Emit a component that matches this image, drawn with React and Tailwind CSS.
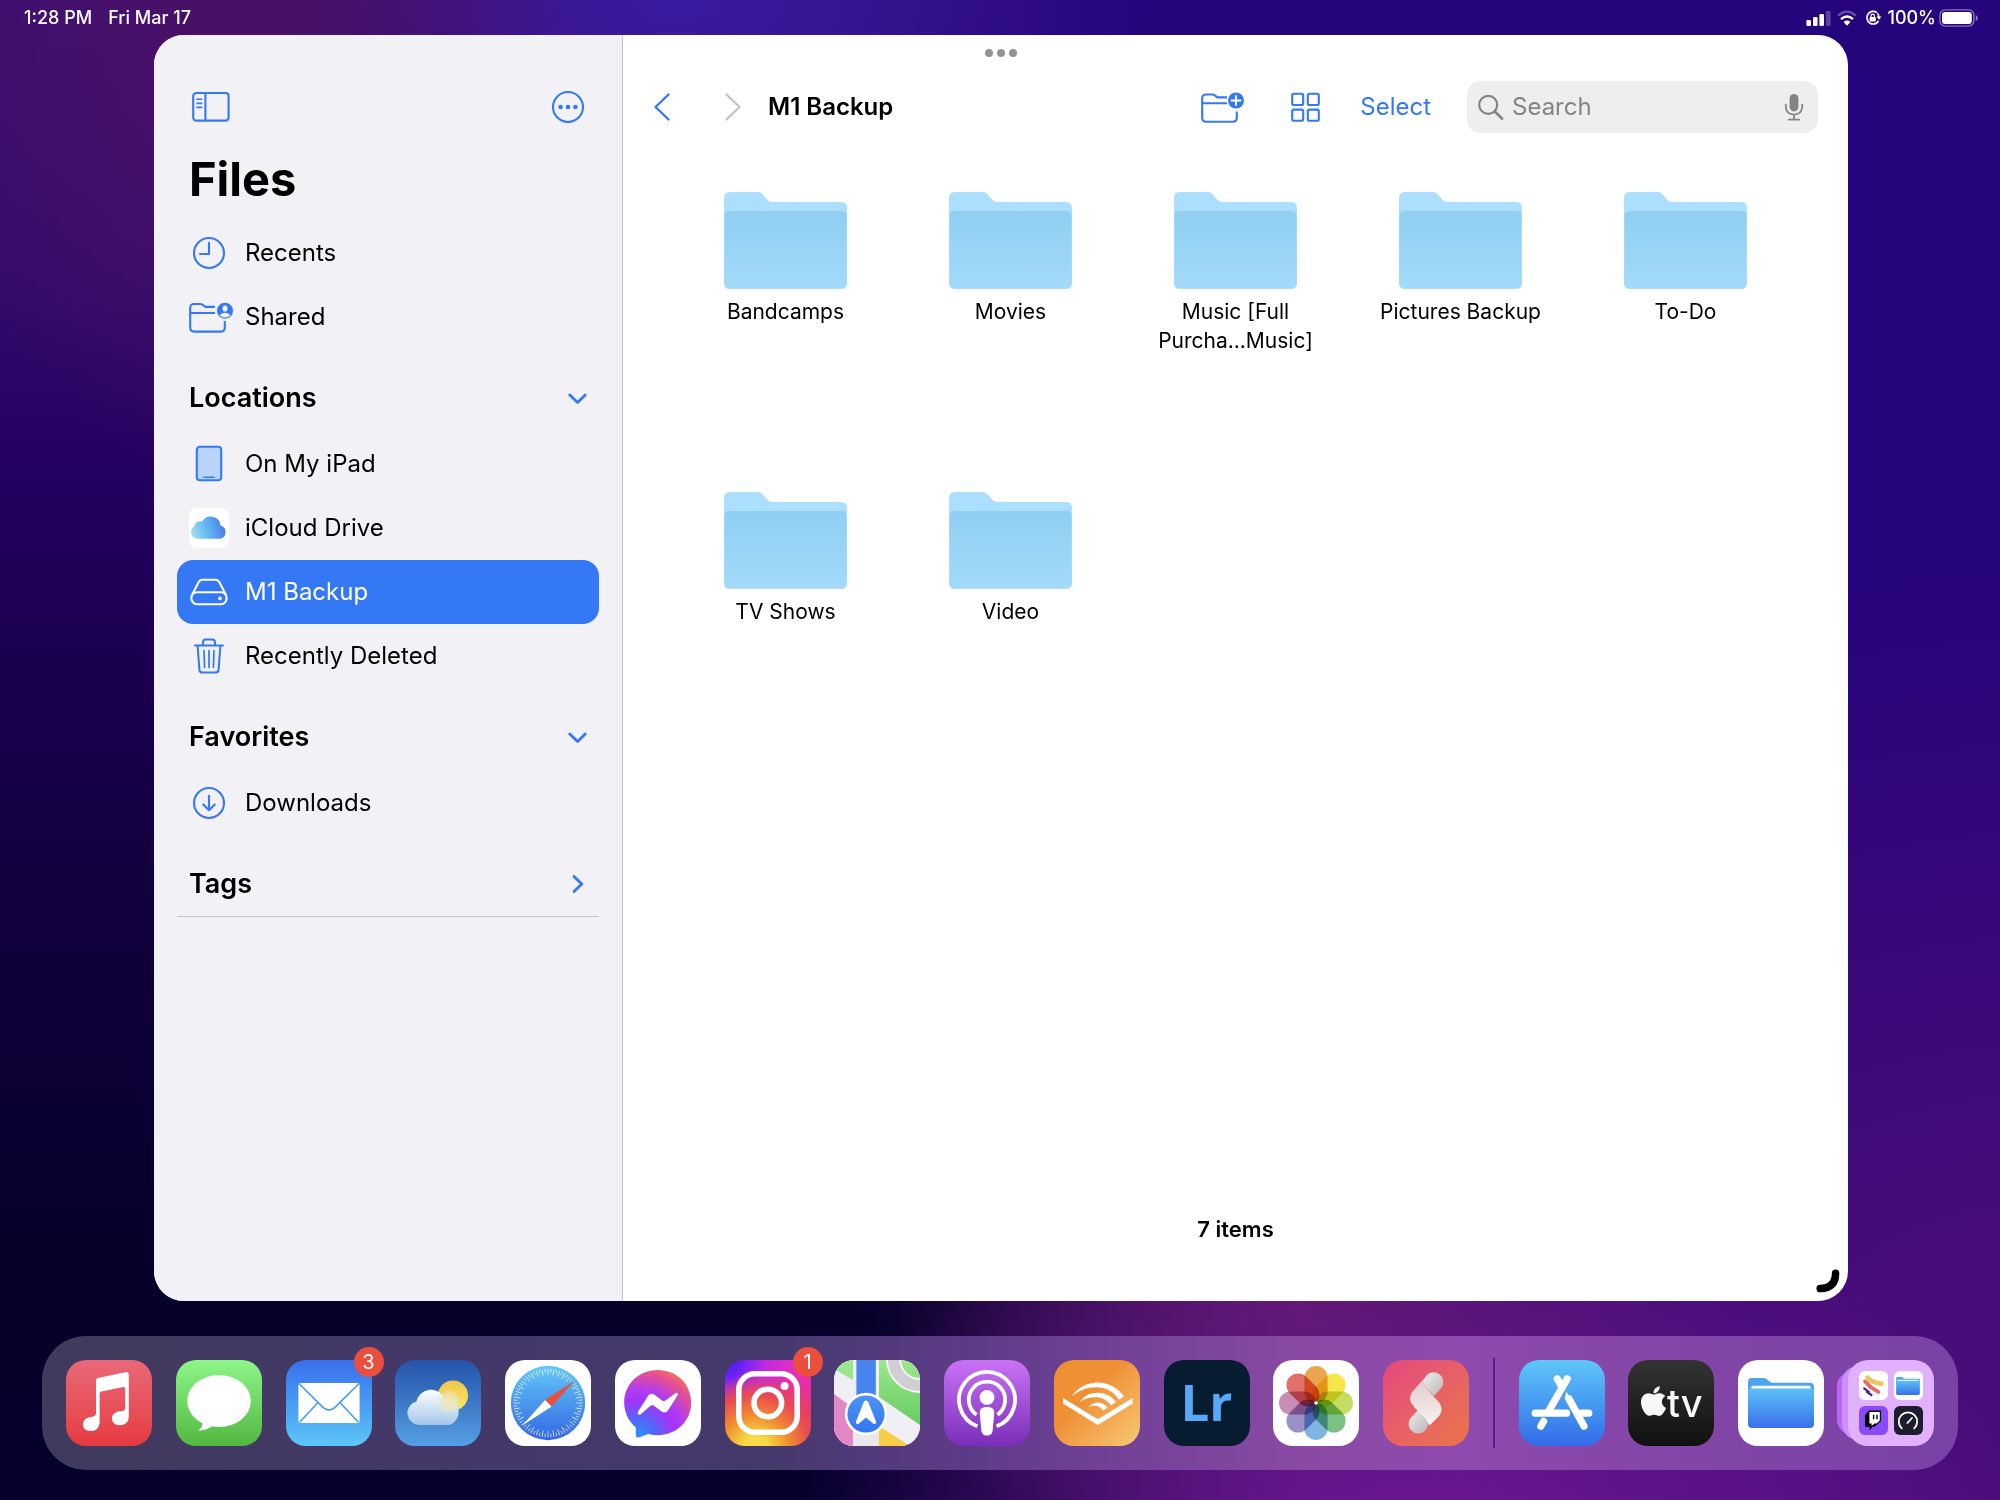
import React from "react";
import { FaApple } from "react-icons/fa";

const ClockIcon = () => (
  <svg width="40" height="40" viewBox="0 0 40 40" fill="none" stroke="currentColor" strokeWidth="2.1">
    <circle cx="20" cy="20" r="15" />
    <path d="M20 9.7V21H11" strokeLinecap="round" strokeLinejoin="round" />
  </svg>
);

const SharedIcon = () => (
  <svg width="40" height="40" viewBox="0 0 40 40" className="overflow-visible" fill="none" stroke="currentColor" strokeWidth="2.1">
    <path d="M26 9.9H16.5L13.4 7.7Q12.4 7 11.2 7H5Q1.2 7 1.2 10.8V30.5Q1.2 34.6 5.2 34.6H31.8Q35.8 34.6 35.8 30.5V24M1.2 16H26" />
    <circle cx="36" cy="13.7" r="8" fill="currentColor" stroke="none" />
    <ellipse cx="36" cy="11.5" rx="2.5" ry="3.1" fill="#f2f1f6" stroke="none" />
    <path d="M30.8 18.4Q32.2 15.8 36 15.8T41.2 18.4Q39 20.4 36 20.4T30.8 18.4Z" fill="#f2f1f6" stroke="none" />
  </svg>
);

const IPadIcon = () => (
  <svg width="40" height="40" viewBox="0 0 40 40" stroke="currentColor" strokeWidth="2.1">
    <rect x="7.8" y="2.8" width="24.4" height="33.4" rx="3" fill="#bad3f8" />
    <path d="M15 33.2H25" strokeWidth="1.5" strokeLinecap="round" />
  </svg>
);

const ICloudIcon = () => (
  <svg width="40" height="40" viewBox="0 0 40 40">
    <defs>
      <linearGradient id="icloud" x1="0" y1="0.6" x2="1" y2="0.4">
        <stop offset="0" stopColor="#a0dcf0" />
        <stop offset="0.45" stopColor="#62b8f2" />
        <stop offset="1" stopColor="#4777e4" />
      </linearGradient>
    </defs>
    <rect width="40" height="40" rx="8" fill="#fff" />
    <path d="M9.3 30.8A6.7 6.7 0 0 1 5 18.6A6 6 0 0 1 13.2 13.6A9.8 9.8 0 0 1 31.5 17.6A6.8 6.8 0 0 1 31.3 30.8Z" fill="url(#icloud)" />
  </svg>
);

const DriveIcon = () => (
  <svg width="40" height="40" viewBox="0 0 40 40" fill="none" stroke="currentColor" strokeWidth="2.1">
    <path d="M3 23L9.6 10.2Q11 7.7 13.6 7.7H26.4Q29 7.7 30.4 10.2L37 23" />
    <rect x="2.4" y="20.2" width="35.2" height="12" rx="5.6" />
    <circle cx="31" cy="26.4" r="1.8" fill="currentColor" stroke="none" />
  </svg>
);

const TrashIcon = () => (
  <svg width="40" height="40" viewBox="0 0 40 40" fill="none" stroke="currentColor" strokeWidth="2" strokeLinecap="round">
    <path d="M6 9.4H34M8.6 9.6L10.4 33.6Q10.6 36.6 13.6 36.6H26.4Q29.4 36.6 29.6 33.6L31.4 9.6" />
    <path d="M14 9V6.4Q14 3.6 16.8 3.6H23.2Q26 3.6 26 6.4V9" />
    <path d="M15 14.5L15.6 31.5M20 14.5V31.5M25 14.5L24.4 31.5" strokeWidth="1.7" />
  </svg>
);

const DownloadIcon = () => (
  <svg width="40" height="40" viewBox="0 0 40 40" fill="none" stroke="currentColor" strokeWidth="2.1" strokeLinecap="round" strokeLinejoin="round">
    <circle cx="20" cy="20" r="15" />
    <path d="M20 12.7V27M14.2 21.4L20 27.2L25.8 21.4" />
  </svg>
);

const Chevron = ({ open }) => (
  <svg width="20" height="20" viewBox="0 0 20 20" fill="none" stroke="currentColor" strokeWidth="2.8" strokeLinecap="round" strokeLinejoin="round">
    <path d={open ? "M2.8 7L10.6 14.6L18.2 7" : "M7 2.4L14.8 10L7 17.6"} />
  </svg>
);

const Row = ({ icon: Icon, label, active }) => (
  <li>
    <a
      href="#"
      aria-current={active ? "page" : undefined}
      className={
        active
          ? "flex h-16 items-center gap-4 rounded-2xl bg-[#3578f6] px-3 text-2xl text-white"
          : "flex h-16 items-center gap-4 px-3 text-2xl text-black"
      }
    >
      <span className={active ? "text-white" : "text-[#3578f6]"}>
        <Icon />
      </span>
      {label}
    </a>
  </li>
);

const Section = ({ title, open, children }) => (
  <section className="pt-[17px]">
    <h2>
      <button aria-expanded={open} className="flex h-16 w-full items-center justify-between px-3 text-[27px] font-semibold">
        {title}
        <span className="text-[#3578f6]">
          <Chevron open={open} />
        </span>
      </button>
    </h2>
    {children && <ul className="pt-0.5">{children}</ul>}
  </section>
);

const Sidebar = () => (
  <aside className="w-[469px] shrink-0 border-r border-[#c3c2c8] bg-[#f2f1f6] px-[23px] pt-[50px]">
    <div className="flex h-11 items-center justify-between px-3.5 text-[#3578f6]">
      <button aria-label="Toggle sidebar">
        <svg width="40" height="36" viewBox="0 0 40 36" fill="none" stroke="currentColor" strokeWidth="2.1">
          <rect x="2.2" y="4" width="35.4" height="27.6" rx="3" />
          <path d="M14.4 4V31.6" />
          <path d="M6 10.2H10.6M6 14.4H10.6M6 18.4H10.6" strokeWidth="1.6" strokeLinecap="round" />
        </svg>
      </button>
      <button aria-label="More options">
        <svg width="34" height="34" viewBox="0 0 34 34" fill="none" stroke="currentColor" strokeWidth="2.1">
          <circle cx="17" cy="17" r="15" />
          <g fill="currentColor" stroke="none">
            <circle cx="9.6" cy="17" r="2.3" />
            <circle cx="17" cy="17" r="2.3" />
            <circle cx="24.4" cy="17" r="2.3" />
          </g>
        </svg>
      </button>
    </div>
    <h1 className="mt-[18px] mb-2.5 px-3 text-[47px] leading-[64px] font-bold">Files</h1>
    <nav>
      <ul>
        <Row icon={ClockIcon} label="Recents" />
        <Row icon={SharedIcon} label="Shared" />
      </ul>
      <Section title="Locations" open>
        <Row icon={IPadIcon} label="On My iPad" />
        <Row icon={ICloudIcon} label="iCloud Drive" />
        <Row icon={DriveIcon} label="M1 Backup" active />
        <Row icon={TrashIcon} label="Recently Deleted" />
      </Section>
      <Section title="Favorites" open>
        <Row icon={DownloadIcon} label="Downloads" />
      </Section>
      <div className="border-b border-[#c8c7cc]">
        <Section title="Tags" open={false} />
      </div>
    </nav>
  </aside>
);

const Folder = ({ name }) => (
  <li>
    <button className="flex w-full flex-col items-center gap-2">
      <svg width="123" height="97" viewBox="0 0 124 97" preserveAspectRatio="none">
        <defs>
          <linearGradient id="folder" x1="0" y1="0" x2="0" y2="1">
            <stop offset="0" stopColor="#8fcff2" />
            <stop offset="1" stopColor="#a3daf9" />
          </linearGradient>
        </defs>
        <path d="M0 6Q0 0 6 0H34Q37 0 39 2.4L44 8Q46 10 49 10H118Q124 10 124 16V91Q124 97 118 97H6Q0 97 0 91Z" fill="#abdffd" />
        <path d="M0.5 24Q0.5 19 5.5 19H118.5Q123.5 19 123.5 24V91Q123.5 96.2 118 96.2H6Q0.5 96.2 0.5 91Z" fill="url(#folder)" />
      </svg>
      <span className="text-[21px] leading-[29px] whitespace-pre-line">{name}</span>
    </button>
  </li>
);

const folders = [
  "Bandcamps",
  "Movies",
  "Music [Full\nPurcha...Music]",
  "Pictures Backup",
  "To-Do",
  "TV Shows",
  "Video",
];

const Toolbar = () => (
  <header className="flex h-[52px] items-center pr-[30px] pl-[30px]">
    <button aria-label="Back" className="text-[#3578f6]">
      <svg width="18" height="30" viewBox="0 0 18 30" fill="none" stroke="currentColor" strokeWidth="2.4" strokeLinecap="round" strokeLinejoin="round">
        <path d="M15.5 2.5L2.5 15L15.5 27.5" />
      </svg>
    </button>
    <button aria-label="Forward" disabled className="ml-[53px] text-[#c3c3c6]">
      <svg width="18" height="30" viewBox="0 0 18 30" fill="none" stroke="currentColor" strokeWidth="2.4" strokeLinecap="round" strokeLinejoin="round">
        <path d="M2.5 2.5L15.5 15L2.5 27.5" />
      </svg>
    </button>
    <h2 className="ml-[26px] text-2xl font-semibold">M1 Backup</h2>
    <div className="ml-auto flex items-center text-[#3578f6]">
      <button aria-label="New folder">
        <svg width="44" height="36" viewBox="0 0 44 36" fill="none" stroke="currentColor" strokeWidth="2.1">
          <path d="M26 8.4H16.5L13.4 6.2Q12.4 5.5 11.2 5.5H5Q1.2 5.5 1.2 9.3V28.8Q1.2 32.8 5.2 32.8H31.8Q35.8 32.8 35.8 28.8V22.5M1.2 14.2H26" />
          <circle cx="35" cy="11.5" r="8" fill="currentColor" stroke="none" />
          <path d="M35 7V16M30.5 11.5H39.5" stroke="#fff" strokeWidth="1.9" strokeLinecap="round" />
        </svg>
      </button>
      <button aria-label="View as icons" className="ml-[45px]">
        <svg width="32" height="32" viewBox="0 0 32 32" fill="none" stroke="currentColor" strokeWidth="2.1">
          <rect x="2.2" y="2.8" width="11" height="11.2" rx="1.8" />
          <rect x="17.8" y="2.8" width="11" height="11.2" rx="1.8" />
          <rect x="2.2" y="18.6" width="11" height="11.2" rx="1.8" />
          <rect x="17.8" y="18.6" width="11" height="11.2" rx="1.8" />
        </svg>
      </button>
      <button className="ml-[38px] text-2xl">Select</button>
      <label className="ml-9 flex h-[52px] w-[351px] items-center rounded-[14px] bg-[#eeeeef] pr-3 pl-2.5 text-[#848488]">
        <svg width="28" height="28" viewBox="0 0 28 28" fill="none" stroke="currentColor" strokeWidth="2.2" strokeLinecap="round">
          <circle cx="11.2" cy="11.8" r="9" />
          <path d="M17.8 18.4L25 25.4" strokeWidth="2.8" />
        </svg>
        <input
          type="search"
          aria-label="Search"
          placeholder="Search"
          className="ml-[7px] w-full min-w-0 flex-1 bg-transparent text-2xl outline-none placeholder:text-[#848488]"
        />
        <svg width="24" height="30" viewBox="0 0 24 30" fill="none" stroke="currentColor" strokeWidth="1.8" strokeLinecap="round">
          <rect x="7.6" y="2" width="8.8" height="17.4" rx="4.4" fill="currentColor" stroke="none" />
          <path d="M3.8 12.6V15Q4.4 22.4 12 22.6Q19.6 22.4 20.2 15V12.6M12 22.8V27.4M6.8 27.6H17.2" />
        </svg>
      </label>
    </div>
  </header>
);

const FilesWindow = () => (
  <main className="relative mr-[152px] mb-[35px] ml-[154px] flex flex-1 overflow-hidden rounded-[30px] bg-white">
    <Sidebar />
    <div className="flex flex-1 flex-col pt-[46px]">
      <Toolbar />
      <ul className="mx-[50px] mt-[59px] grid auto-rows-[300px] grid-cols-5">
        {folders.map((name) => (
          <Folder key={name} name={name} />
        ))}
      </ul>
      <p className="mt-auto pb-[57px] text-center text-[22px] leading-[29px] font-semibold">7 items</p>
    </div>
    <button aria-label="Window controls" className="absolute top-3.5 left-1/2 flex -translate-x-1/2 gap-1">
      <span className="h-2 w-2 rounded-full bg-[#949496]" />
      <span className="h-2 w-2 rounded-full bg-[#949496]" />
      <span className="h-2 w-2 rounded-full bg-[#949496]" />
    </button>
    <svg width="26" height="26" viewBox="0 0 26 26" className="absolute right-[7px] bottom-[7px]" fill="none" stroke="#000" strokeWidth="7.5" strokeLinecap="round">
      <path d="M20.6 5.2Q20.6 20 5.2 20.6" />
    </svg>
  </main>
);

const StatusBar = () => (
  <div className="flex h-[35px] items-center justify-between pr-[21px] pl-6 text-lg leading-[35px] font-medium text-white">
    <div className="flex gap-4">
      <span>1:28 PM</span>
      <span>Fri Mar 17</span>
    </div>
    <div className="flex items-center">
      <svg width="26" height="18" viewBox="0 0 26 18" fill="currentColor">
        <rect x="0.4" y="11" width="4.6" height="6" rx="1.2" />
        <rect x="7" y="8" width="4.6" height="9" rx="1.2" />
        <rect x="13.4" y="5" width="4.6" height="12" rx="1.2" />
        <rect x="20" y="2" width="4.6" height="15" rx="1.2" opacity="0.25" />
      </svg>
      <svg width="20" height="18" viewBox="0 0 20 18" className="ml-[5px]" fill="none" stroke="currentColor" strokeWidth="2.3">
        <path d="M1 6.6Q10 -1.4 19 6.6" opacity="0.3" />
        <path d="M4 10.2Q10 4.8 16 10.2" />
        <path d="M6.6 13Q10 10.2 13.4 13L10 16.8Z" fill="currentColor" stroke="none" />
      </svg>
      <svg width="18" height="18" viewBox="0 0 18 18" className="ml-[7px]" fill="none" stroke="currentColor" strokeWidth="1.7">
        <path d="M13 3.6A6.3 6.3 0 1 0 14.6 12" />
        <path d="M12.6 7.4H17.4L15 10.8Z" fill="currentColor" stroke="none" />
        <rect x="5.6" y="8" width="6.2" height="4.6" rx="0.8" fill="currentColor" stroke="none" />
        <path d="M7 8.4V7Q7 5.2 8.7 5.2T10.4 7V8.4" strokeWidth="1.2" />
        <path d="M15 9Q15 6 13.4 4.2" />
      </svg>
      <span className="ml-[5px]">100%</span>
      <svg width="40" height="18" viewBox="0 0 40 18" className="ml-[3px]" fill="none">
        <rect x="0.9" y="0.9" width="34" height="16.2" rx="5.4" stroke="currentColor" strokeWidth="1.4" opacity="0.45" />
        <rect x="3" y="3" width="29.8" height="12" rx="3.2" fill="currentColor" />
        <path d="M36.8 6Q38.8 7 38.8 9T36.8 12Z" fill="currentColor" opacity="0.5" />
      </svg>
    </div>
  </div>
);

const AppSvg = ({ children }) => (
  <svg width="86" height="86" viewBox="0 0 86 86" className="block">
    {children}
  </svg>
);

const Music = () => (
  <AppSvg>
    <path d="M30 21Q30 18.4 32.6 17.8L59.6 12.2Q62.8 11.6 62.8 14.6V56C62.8 62 59.6 65.2 53.6 65.2C48.8 65.2 46 62.6 46 58.6C46 54 49 51.8 54 51.2C58 50.8 59.2 50 59.2 47.4V28.6Q59.2 26.6 57.2 27L35.4 31.4Q33.6 31.8 33.6 33.6V61.4C33.6 67.4 30.4 71 24.4 71C19.6 71 17 68.4 17 64.6C17 60.2 20 57.8 24.8 57C28.8 56.4 30 55.4 30 52.8Z" fill="#fff" />
  </AppSvg>
);

const Messages = () => (
  <AppSvg>
    <ellipse cx="43" cy="41" rx="31.8" ry="26" fill="#fff" />
    <path d="M26 60Q28.4 66 22.4 70.4Q31 71 37.4 65Z" fill="#fff" />
  </AppSvg>
);

const Mail = () => (
  <AppSvg>
    <rect x="12.4" y="23" width="61.2" height="40" rx="3" fill="#fff" />
    <path d="M13.4 24L37 47.4Q43 52.8 49 47.4L72.6 24M13.8 62L31.6 43M72.2 62L54.4 43" fill="none" stroke="#4c9cf2" strokeWidth="1.7" />
  </AppSvg>
);

const Weather = () => (
  <AppSvg>
    <defs>
      <linearGradient id="cloud" x1="0" y1="0" x2="0" y2="1">
        <stop offset="0" stopColor="#fff" />
        <stop offset="1" stopColor="#a4c6ea" />
      </linearGradient>
      <linearGradient id="sun" x1="0" y1="0" x2="0" y2="1">
        <stop offset="0" stopColor="#f0c552" />
        <stop offset="1" stopColor="#f9e95c" />
      </linearGradient>
      <radialGradient id="glow" cx="54" cy="42" r="13" gradientUnits="userSpaceOnUse">
        <stop offset="0" stopColor="#efe6b0" />
        <stop offset="0.5" stopColor="#ece7bf" stopOpacity="0.85" />
        <stop offset="1" stopColor="#dfe4d8" stopOpacity="0" />
      </radialGradient>
    </defs>
    <circle cx="58" cy="35.4" r="15" fill="url(#sun)" />
    <path d="M25 65A12 12 0 0 1 21.4 41.4A15 15 0 0 1 49.6 38.4A13.6 13.6 0 0 1 54 65Z" fill="url(#cloud)" />
    <circle cx="54" cy="42" r="12" fill="url(#glow)" />
  </AppSvg>
);

const ticks = Array.from({ length: 72 }, (_, i) => i * 5);

const Safari = () => (
  <AppSvg>
    <defs>
      <linearGradient id="safari" x1="0" y1="0" x2="0" y2="1">
        <stop offset="0" stopColor="#62c8f8" />
        <stop offset="1" stopColor="#3367e2" />
      </linearGradient>
    </defs>
    <circle cx="43" cy="43" r="37.2" fill="url(#safari)" />
    {ticks.map((deg) => (
      <path key={deg} d={deg % 10 ? "M43 8.6V12.2" : "M43 8.6V15"} stroke="#fff" strokeWidth="0.9" opacity="0.75" transform={`rotate(${deg} 43 43)`} />
    ))}
    <path d="M69.8 20.6L40 40L46.6 46.4Z" fill="#ea4e3d" />
    <path d="M17.4 65.4L40 40L46.6 46.4Z" fill="#fff" />
  </AppSvg>
);

const Messenger = () => (
  <AppSvg>
    <defs>
      <radialGradient id="messenger" cx="0.2" cy="1" r="1.08">
        <stop offset="0" stopColor="#2a94fa" />
        <stop offset="0.22" stopColor="#4a6df8" />
        <stop offset="0.5" stopColor="#a334f8" />
        <stop offset="0.65" stopColor="#b03cf0" />
        <stop offset="0.9" stopColor="#e8508e" />
        <stop offset="1" stopColor="#ef6e62" />
      </radialGradient>
    </defs>
    <path d="M42.8 10C61.6 10 76.2 24 76.2 42.6S61.6 75.2 42.8 75.2C39.4 75.2 36.2 74.8 33.2 74L24 77.4Q20.8 78.2 20.8 75V67.4C13.6 61.4 9.2 52.8 9.2 42.6C9.2 24 24 10 42.8 10Z" fill="url(#messenger)" />
    <path d="M23 51.8L33 36Q35.6 32.4 39.4 34.8L47.4 40.8Q48.8 41.6 50.2 40.8L60.4 33.2Q63.4 32 62.6 35.2L53 50.4Q50.4 54 46.6 51.6L38.6 45.6Q37.2 44.8 35.8 45.6L25.4 54.4Q21.8 55.4 23 51.8Z" fill="#fff" />
  </AppSvg>
);

const Instagram = () => (
  <AppSvg>
    <g fill="none" stroke="#fff">
      <rect x="13.8" y="13.8" width="58.4" height="58.4" rx="16" strokeWidth="5.6" />
      <circle cx="42.8" cy="43" r="13.8" strokeWidth="5.6" />
    </g>
    <circle cx="59.6" cy="26" r="4" fill="#fff" />
  </AppSvg>
);

const Maps = () => (
  <AppSvg>
    <defs>
      <linearGradient id="park" x1="0" y1="0" x2="0" y2="1">
        <stop offset="0" stopColor="#9be78b" />
        <stop offset="1" stopColor="#68cc62" />
      </linearGradient>
      <linearGradient id="pin" x1="0" y1="0" x2="0" y2="1">
        <stop offset="0" stopColor="#4d94f2" />
        <stop offset="1" stopColor="#3375f4" />
      </linearGradient>
    </defs>
    <rect width="86" height="86" fill="#f0eff5" />
    <path d="M0 0H19V20L0 9Z" fill="#98e78a" />
    <path d="M0 34L19 48V86H0Z" fill="#e188c4" />
    <path d="M45 0H86V65L45 37Z" fill="url(#park)" />
    <path d="M45 66L76 86H45Z" fill="#f7cf46" />
    <rect x="19" y="60" width="26" height="26" fill="#e9e8ee" />
    <rect x="22.4" width="19.4" height="44" fill="#4685ee" />
    <circle cx="86" cy="-1" r="26.5" fill="none" stroke="#fff" strokeWidth="15" />
    <circle cx="86" cy="-1" r="26.5" fill="none" stroke="#cfced4" strokeWidth="11.6" />
    <circle cx="32" cy="54" r="21.2" fill="#fff" />
    <circle cx="32" cy="54" r="18.6" fill="url(#pin)" />
    <path d="M32 40.4Q33.6 40.4 34.2 42L42 61.6Q42.4 65 39.4 63.8L32 57.6L24.6 63.8Q21.6 65 22 61.6L29.8 42Q30.4 40.4 32 40.4Z" fill="#fff" />
  </AppSvg>
);

const Podcasts = () => (
  <AppSvg>
    <g fill="none" stroke="#fff" strokeWidth="3.8">
      <path d="M33.4 66.2A28 28 0 1 1 52.6 66.2" />
      <path d="M32.6 54.8A18.2 18.2 0 1 1 53.4 54.8" />
    </g>
    <circle cx="43" cy="37.4" r="7.4" fill="#fff" />
    <path d="M43 47C48.4 47 50.4 49.2 50.2 53.4L48.6 71Q47.8 75.6 43 75.6T37.4 71L35.8 53.4C35.6 49.2 37.6 47 43 47Z" fill="#fff" />
  </AppSvg>
);

const Audible = () => (
  <AppSvg>
    <g fill="#fff">
      <path d="M9 38L43.8 59.2L78.6 38V43.4L43.8 65L9 43.4Z" />
      <path d="M18 36.4C24 27.4 33 22.6 43.8 22.6C54.6 22.6 64 28 70 36.6L65 39.6C59.4 31.4 52 27.2 42.4 27.2C33 27.2 25.4 30 18 36.4Z" />
      <path d="M25.6 42.2C30 35.8 36 32.8 43.8 32.8C51.6 32.8 57.6 36.4 62 42L57 45.2C52.6 39.6 47.6 37.2 41.4 37.2C35 37.2 30.4 38.8 25.6 42.2Z" />
      <path d="M34.2 47.4C37 43.8 40 42.4 44 42.4C48 42.4 51 44.4 53.4 47.6L49.4 50.4C46.6 47 43.4 45.8 40.4 45.8C38 45.8 36 46.4 34.2 47.4Z" />
    </g>
  </AppSvg>
);

const Lightroom = () => (
  <span className="flex h-full items-center justify-center pb-1 font-['Open_Sans'] text-[51px] leading-none font-bold text-[#58a7f8]">
    Lr
  </span>
);

const petals = ["#eba54f", "#f6e64a", "#c5dc62", "#7cc084", "#7eb5e3", "#9a90c8", "#c98cb4", "#e26f6a"];

const Photos = () => (
  <AppSvg>
    {petals.map((color, i) => (
      <rect key={color} x="31.4" y="6" width="23.2" height="37" rx="11.6" fill={color} className="mix-blend-multiply" transform={`rotate(${i * 45} 43 43)`} />
    ))}
    <circle cx="43" cy="43" r="1.8" fill="#fff" />
  </AppSvg>
);

const Ribbon = () => (
  <AppSvg>
    <defs>
      <linearGradient id="ribbon" x1="0" y1="0" x2="0" y2="1">
        <stop offset="0" stopColor="#dfc9c8" />
        <stop offset="1" stopColor="#f8f4f3" />
      </linearGradient>
      <linearGradient id="cap" x1="0" y1="0" x2="1" y2="1">
        <stop offset="0" stopColor="#efeded" />
        <stop offset="1" stopColor="#b9b6b5" />
      </linearGradient>
    </defs>
    <path d="M43 16.4L30 31C26 36 26.4 41 30 45.4L46.8 65.6L56 56C59.6 51.4 59.4 46.6 56 42.4L41.6 26Z" fill="url(#ribbon)" />
    <path d="M42.4 17.2A9.6 9.6 0 1 1 56.8 29.4L51 36L43 27.6Q38.6 22.4 42.4 17.2Z" fill="url(#cap)" />
    <path d="M43.4 69A9.6 9.6 0 1 1 28.8 56.8L34.6 50.4L42.6 58.8Q47.2 64 43.4 69Z" fill="url(#cap)" />
  </AppSvg>
);

const AppStore = () => (
  <AppSvg>
    <g stroke="#fff" strokeWidth="7.2" strokeLinecap="round" fill="none">
      <path d="M38.2 18.8L42 25.4M48.2 18.8L29.4 51.6M16.2 53.2H47.6M61 53.2H69.8" />
      <path d="M24.6 61.4L21.8 66.2M50 38.8L65 66.2" />
    </g>
    <path d="M47.2 31.4L45.8 38.4L52 50L58 48Z" fill="#fff" />
  </AppSvg>
);

const AppleTV = () => (
  <span className="flex h-full items-center justify-center text-[38px] leading-none text-[#f8f8f8]">
    <FaApple className="mb-1 h-[34px] w-[27px]" />
    <span className="font-medium">tv</span>
  </span>
);

const FolderGlyph = ({ className }) => (
  <svg viewBox="0 0 66 50" className={className}>
    <defs>
      <linearGradient id="files" x1="0" y1="0" x2="0" y2="1">
        <stop offset="0" stopColor="#5bc0f6" />
        <stop offset="1" stopColor="#3a70ea" />
      </linearGradient>
    </defs>
    <path d="M0 4Q0 0 4 0H15Q17.4 0 19 1.4L21.6 3.6Q23 4.8 25 4.8H62Q66 4.8 66 8.8V20H0Z" fill="#4ba6ee" />
    <rect x="3.4" y="7.8" width="59.2" height="8" rx="1.4" fill="#fff" />
    <path d="M0 13.6Q0 10.4 3.4 10.4H62.6Q66 10.4 66 13.6V46Q66 50 62 50H4Q0 50 0 46Z" fill="url(#files)" />
  </svg>
);

const FilesApp = () => (
  <span className="flex h-full items-center justify-center">
    <FolderGlyph className="h-[50px] w-[66px]" />
  </span>
);

const AppLibrary = () => (
  <span className="grid h-full grid-cols-2 content-center justify-center gap-1.5 px-[11px]">
    <span className="flex h-[29px] items-center justify-center rounded-md bg-white">
      <svg width="24" height="25" viewBox="0 0 24 25" fill="none" strokeLinecap="round" strokeLinejoin="round">
        <path d="M6.4 4.6Q11 10 20.4 10.6" stroke="#f0c55e" strokeWidth="4.6" />
        <path d="M4 8.4L10 14.4L8.6 13.4L17.4 19" stroke="#e36a66" strokeWidth="3.8" />
        <path d="M3.2 15.4L7.8 18.8L5.8 18.8L10.4 22" stroke="#4520a4" strokeWidth="2.2" />
      </svg>
    </span>
    <span className="flex h-[29px] items-center justify-center rounded-md bg-white">
      <FolderGlyph className="h-[18px] w-6" />
    </span>
    <span className="flex h-[29px] items-center justify-center rounded-md bg-[#8a4bf6]">
      <svg width="18" height="21" viewBox="0 0 18 21">
        <path d="M1 5L5 0.6H17V11L11 16.6H8.6L5.6 20.4V16.8H1Z" fill="#000" />
        <path d="M5.4 2H15.8V10.4L12.6 13.4H10.4L7.6 16V13.4H5.4Z" fill="#fff" />
        <path d="M9.6 4.8V9.2M13 4.8V9.2" stroke="#000" strokeWidth="1.4" />
      </svg>
    </span>
    <span className="flex h-[29px] items-center justify-center rounded-md bg-[#1c1d2f]">
      <svg width="22" height="22" viewBox="0 0 22 22" fill="none" stroke="#fff" strokeWidth="1.8" strokeLinecap="round">
        <path d="M4.8 18.4A9.2 9.2 0 1 1 17.2 18.4M10.4 13L15 8" />
      </svg>
    </span>
  </span>
);

const apps = [
  { name: "Music", icon: Music, bg: "bg-linear-to-b from-[#e96878] to-[#e53a40]" },
  { name: "Messages", icon: Messages, bg: "bg-linear-to-b from-[#8df688] to-[#52b840]" },
  { name: "Mail", icon: Mail, bg: "bg-linear-to-b from-[#3a6eea] to-[#5ec6f8]", badge: 3 },
  { name: "Weather", icon: Weather, bg: "bg-linear-to-b from-[#2553a8] to-[#569fe3]" },
  { name: "Safari", icon: Safari, bg: "bg-white" },
  { name: "Messenger", icon: Messenger, bg: "bg-white" },
  {
    name: "Instagram",
    icon: Instagram,
    bg: "bg-[radial-gradient(circle_at_35%_105%,#f9dc45_12%,#f0902f_32%,#ea4a50_52%,transparent_72%),radial-gradient(circle_at_0%_0%,#5a20fa_10%,#c22ae0_34%,transparent_56%),linear-gradient(#e42ccc,#ea3088_50%,#e6305a)]",
    badge: 1,
  },
  { name: "Maps", icon: Maps, bg: "bg-white" },
  { name: "Podcasts", icon: Podcasts, bg: "bg-linear-to-b from-[#ca72f6] to-[#7a2eb8]" },
  { name: "Audible", icon: Audible, bg: "bg-linear-to-br from-[#ef9035] from-40% to-[#f6c872]" },
  { name: "Lightroom", icon: Lightroom, bg: "bg-[#071c31]" },
  { name: "Photos", icon: Photos, bg: "bg-white" },
  { name: "Ribbon", icon: Ribbon, bg: "bg-linear-to-br from-[#e5477f] to-[#e97545]" },
];

const recents = [
  { name: "App Store", icon: AppStore, bg: "bg-linear-to-b from-[#60c6f8] to-[#356be8]" },
  { name: "Apple TV", icon: AppleTV, bg: "bg-linear-to-b from-[#343434] to-[#101010]" },
  { name: "Files", icon: FilesApp, bg: "bg-white" },
];

const DockIcon = ({ name, icon: Icon, bg, badge }) => (
  <button aria-label={name} className="relative h-[86px] w-[86px]">
    <span className={`block h-full overflow-hidden rounded-[20px] ${bg}`}>
      <Icon />
    </span>
    {badge && (
      <span className="absolute -top-[13px] -right-3 flex h-[30px] w-[30px] items-center justify-center rounded-full bg-[#ea4e3d] text-xl text-white">
        {badge}
      </span>
    )}
  </button>
);

const Dock = () => (
  <footer className="mx-[42px] mb-[30px] flex h-[134px] items-center justify-between rounded-[44px] bg-linear-to-r from-[#403a5e] via-[#453a6c] via-42% to-[#7b44a8] px-6 [background-image:linear-gradient(90deg,#403a5c,#433868_18%,#45396c_38%,#5a3b84_47%,#6f4096_55%,#8a4aa4_66%,#8e4aae_74%,#8446a8_84%,#7a42a6)]">
    {apps.map((app) => (
      <DockIcon key={app.name} {...app} />
    ))}
    <span className="h-[90px] w-0.5 bg-[#6b1390]" />
    {recents.map((app) => (
      <DockIcon key={app.name} {...app} />
    ))}
    <div className="relative flex">
      <span className="absolute top-3 -left-[11px] h-[62px] w-10 rounded-[14px] bg-[#b868f2]" />
      <span className="absolute top-1.5 -left-[6px] h-[74px] w-10 rounded-[16px] bg-[#cb90fb]" />
      <DockIcon name="App Library" icon={AppLibrary} bg="bg-[#e1b0ff]" />
    </div>
  </footer>
);

export default function App() {
  return (
    <div className="flex min-h-screen flex-col bg-[radial-gradient(ellipse_16%_32%_at_12%_0%,#4a1068_15%,transparent),radial-gradient(ellipse_24%_16%_at_34%_0%,#3a1aa0,transparent),radial-gradient(ellipse_32%_26%_at_71%_104%,#6e1896_5%,transparent),radial-gradient(ellipse_22%_18%_at_65%_87%,#5c1a68,transparent),radial-gradient(ellipse_60%_60%_at_104%_98%,#480c78_25%,transparent),radial-gradient(ellipse_80%_120%_at_98%_12%,#26047c_55%,transparent_88%),linear-gradient(#3c0f72,#340c6c_18%,#220060_32%,#13003f_58%,#06002a_84%,#05002c)] font-['Inter',sans-serif] text-black antialiased">
      <StatusBar />
      <FilesWindow />
      <Dock />
    </div>
  );
}
